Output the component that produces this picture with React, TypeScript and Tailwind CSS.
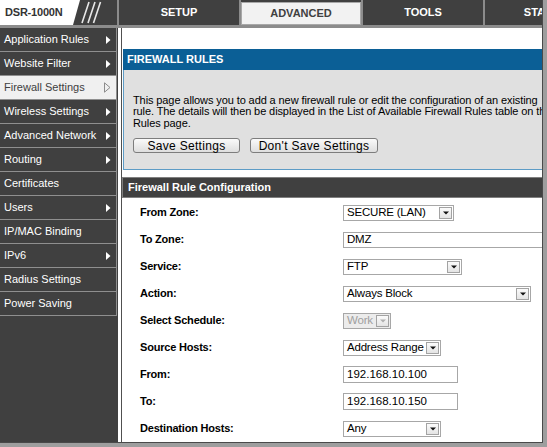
import React from "react";

const menu = [
    { label: "Application Rules", arrow: true },
    { label: "Website Filter", arrow: true },
    { label: "Firewall Settings", arrow: true, active: true },
    { label: "Wireless Settings", arrow: true },
    { label: "Advanced Network", arrow: true },
    { label: "Routing", arrow: true },
    { label: "Certificates", arrow: false },
    { label: "Users", arrow: true },
    { label: "IP/MAC Binding", arrow: false },
    { label: "IPv6", arrow: true },
    { label: "Radius Settings", arrow: false },
    { label: "Power Saving", arrow: false },
];

function MenuArrow({ hollow }: { hollow?: boolean }) {
    if (hollow) {
        return (
            <svg width="7" height="11" viewBox="0 0 7 11">
                <path d="M0.5 0.8 L6 5.5 L0.5 10.2 Z" fill="none" stroke="#8c8c8c" strokeWidth="1" />
            </svg>
        );
    }
    return (
        <svg width="5" height="8" viewBox="0 0 5 8">
            <path d="M0 0 L4.5 4 L0 8 Z" fill="#ffffff" />
        </svg>
    );
}

function DropArrow({ disabled }: { disabled?: boolean }) {
    return (
        <span className="mr-[1px] flex h-[12px] w-[13px] shrink-0 items-center justify-center border border-[#a3a3a3] bg-linear-to-b from-[#fbfbfb] to-[#e4e4e4]">
            <svg width="6" height="4" viewBox="0 0 6 4">
                <path d="M0 0.5 L6 0.5 L3 3.5 Z" fill={disabled ? "#b0b0b0" : "#111"} />
            </svg>
        </span>
    );
}

function Select({ value, className, disabled, noArrow }: { value: string; className: string; disabled?: boolean; noArrow?: boolean }) {
    return (
        <div
            className={`flex h-[16px] shrink-0 items-center border border-[#a7a7a7] ${
                disabled ? "bg-[#ececec] text-[#a0a0a0]" : "bg-white text-black"
            } ${className}`}
        >
            <span className="flex-1 pl-[3px] text-[11.5px] leading-none tracking-[-0.2px] whitespace-nowrap">{value}</span>
            {!noArrow && <DropArrow disabled={disabled} />}
        </div>
    );
}

function TextInput({ value }: { value: string }) {
    return (
        <div className="flex h-[17px] w-[115px] items-center border border-[#a7a7a7] bg-white pl-[3px] text-[11.5px] leading-none text-black">
            {value}
        </div>
    );
}

const rows: { label: string; control: React.ReactNode }[] = [
    { label: "From Zone:", control: <Select value="SECURE (LAN)" className="w-[111px]" /> },
    { label: "To Zone:", control: <Select value="DMZ" className="w-[260px]" noArrow /> },
    { label: "Service:", control: <Select value="FTP" className="w-[119px]" /> },
    { label: "Action:", control: <Select value="Always Block" className="w-[188px]" /> },
    { label: "Select Schedule:", control: <Select value="Work" className="w-[48px]" disabled /> },
    { label: "Source Hosts:", control: <Select value="Address Range" className="w-[98px]" /> },
    { label: "From:", control: <TextInput value="192.168.10.100" /> },
    { label: "To:", control: <TextInput value="192.168.10.150" /> },
    { label: "Destination Hosts:", control: <Select value="Any" className="w-[98px]" /> },
];

export default function App() {
    return (
        <div className="h-[447px] w-[547px] overflow-hidden bg-[#9e9e9e] font-['Liberation_Sans',Arial,sans-serif]">
            <div className="flex h-[443px] w-[543px] flex-col overflow-hidden border-r border-b border-[#4a4a4a] bg-white">
                {/* top bar */}
                <div className="flex h-[28px] shrink-0 border-b-[3px] border-[#8c8c8c] bg-[#404040]">
                    <div className="flex h-[25px] w-[117px] shrink-0">
                        <div className="flex h-full w-[73px] items-center bg-white pl-[5px] text-[11px] font-bold tracking-[-0.2px] text-[#333]">
                            DSR-1000N
                        </div>
                        <svg width="44" height="25" viewBox="0 0 44 25">
                            <polygon points="0,0 7,0 0,25" fill="#ffffff" />
                            <path d="M9 23 L16 2 M15 23 L22 2 M20.5 23 L27.5 2" stroke="#e8e8e8" strokeWidth="1.6" />
                        </svg>
                    </div>
                    {["SETUP", "ADVANCED", "TOOLS", "STATUS"].map((t) => (
                        <div key={t} className="flex h-[25px] w-[122px] shrink-0 border-l-2 border-[#8c8c8c]">
                            {t === "ADVANCED" ? (
                                <div className="mt-[2px] flex h-[23px] w-full items-center justify-center border border-[#a8a8a8] bg-[#f2f2f2] text-[11px] font-bold text-[#404040]">
                                    {t}
                                </div>
                            ) : (
                                <div className="flex h-full w-full items-center justify-center text-[11px] font-bold text-white">
                                    {t}
                                </div>
                            )}
                        </div>
                    ))}
                </div>

                <div className="flex min-h-0 flex-1">
                    {/* sidebar */}
                    <div className="w-[118px] shrink-0 bg-[#404040]">
                        {menu.map((m) => (
                            <div
                                key={m.label}
                                className={`flex h-[24px] w-[117px] items-center justify-between border-r border-b border-[#8f8f8f] pr-[5px] pl-[4px] text-[11px] ${
                                    m.active ? "bg-[#f0f0f0] text-[#404040]" : "text-white"
                                }`}
                            >
                                <span className="whitespace-nowrap">{m.label}</span>
                                {m.arrow && <MenuArrow hollow={m.active} />}
                            </div>
                        ))}
                    </div>

                    {/* content */}
                    <div className="ml-[3px] w-[480px] shrink-0 border-l border-[#505050]">
                        <div className="mt-[21px] ml-[1px]">
                            <div className="flex h-[21px] items-center bg-[#0b5f96] pl-[4px] text-[11px] font-bold text-white">
                                FIREWALL RULES
                            </div>
                            <div className="h-[100px] border-b border-l border-[#5d9cc6] bg-[#e0e0e0] pt-[25px] pl-[9px]">
                                <p className="text-[11px] leading-[11.4px] tracking-[-0.1px] whitespace-nowrap text-black">
                                    This page allows you to add a new firewall rule or edit the configuration of an existing
                                    <br />
                                    rule. The details will then be displayed in the List of Available Firewall Rules table on the Firewall
                                    <br />
                                    Rules page.
                                </p>
                                <div className="mt-[9px] flex gap-[10px]">
                                    <button className="h-[15px] w-[107px] rounded-[3px] border border-[#7d7d7d] bg-linear-to-b from-[#fafafa] to-[#dedede] text-[12px] leading-none tracking-[0.3px] text-black">
                                        Save Settings
                                    </button>
                                    <button className="h-[15px] w-[128px] rounded-[3px] border border-[#7d7d7d] bg-linear-to-b from-[#fafafa] to-[#dedede] text-[12px] leading-none tracking-[0.3px] text-black">
                                        Don't Save Settings
                                    </button>
                                </div>
                            </div>
                        </div>

                        <div className="mt-[7px] flex h-[21px] items-center border border-[#808080] bg-[#404040] pl-[5px] text-[11px] font-bold text-white">
                            Firewall Rule Configuration
                        </div>

                        <div className="pt-[1px]">
                            {rows.map((r) => (
                                <div key={r.label} className="flex h-[27px] items-center">
                                    <div className="w-[221px] shrink-0 pl-[18px] text-[11px] font-bold tracking-[-0.2px] text-black">
                                        {r.label}
                                    </div>
                                    {r.control}
                                </div>
                            ))}
                        </div>
                    </div>
                </div>
            </div>
        </div>
    );
}
